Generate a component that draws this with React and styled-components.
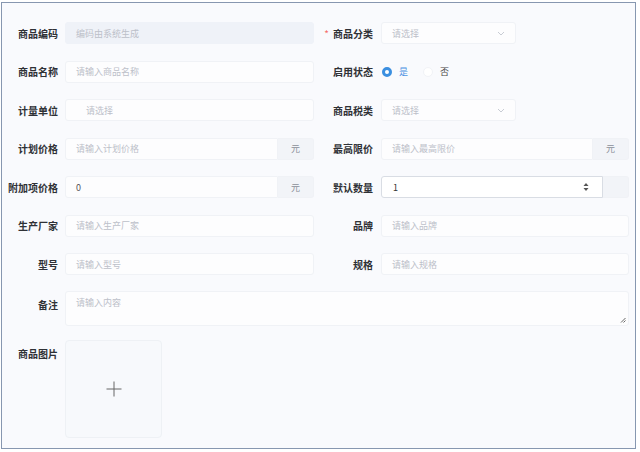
import { createGlobalStyle, styled } from 'styled-components'

const GlobalStyle = createGlobalStyle`
  html, body {
    margin: 0;
    padding: 0;
    background: #fff;
  }
  body {
    font-family: "Noto Sans CJK SC", "Noto Sans", sans-serif;
  }
`

function Chevron() {
  return (
    <svg width="8" height="5" viewBox="0 0 8 5">
      <path d="M1 1l3 3 3-3" fill="none" stroke="#c8ccd4" strokeWidth="1" />
    </svg>
  )
}

function Spinner() {
  return (
    <svg width="6" height="10" viewBox="0 0 6 10">
      <path d="M3 1L5.5 4H0.5z" fill="#555" />
      <path d="M3 9L5.5 6H0.5z" fill="#555" />
    </svg>
  )
}

function App() {
  return (
    <>
      <GlobalStyle />
      <Frame>
        <Grid>
          <Field>
            <Label $w={55}>商品编码</Label>
            <Input $disabled>编码由系统生成</Input>
          </Field>
          <Field>
            <Label $w={59} $required>商品分类</Label>
            <Select $w={135}>
              <span>请选择</span>
              <Chevron />
            </Select>
          </Field>

          <Field>
            <Label $w={55}>商品名称</Label>
            <Input>请输入商品名称</Input>
          </Field>
          <Field>
            <Label $w={59}>启用状态</Label>
            <Radios>
              <Radio $checked>
                <Dot $checked />
                <span>是</span>
              </Radio>
              <Radio>
                <Dot />
                <span>否</span>
              </Radio>
            </Radios>
          </Field>

          <Field>
            <Label $w={55}>计量单位</Label>
            <Select $indent>
              <span>请选择</span>
            </Select>
          </Field>
          <Field>
            <Label $w={59}>商品税类</Label>
            <Select $w={135}>
              <span>请选择</span>
              <Chevron />
            </Select>
          </Field>

          <Field>
            <Label $w={55}>计划价格</Label>
            <Group>
              <Input $joined>请输入计划价格</Input>
              <Addon>元</Addon>
            </Group>
          </Field>
          <Field>
            <Label $w={59}>最高限价</Label>
            <Group>
              <Input $joined>请输入最高限价</Input>
              <Addon>元</Addon>
            </Group>
          </Field>

          <Field>
            <Label $w={55}>附加项价格</Label>
            <Group>
              <Input $joined $value>0</Input>
              <Addon>元</Addon>
            </Group>
          </Field>
          <Field>
            <Label $w={59}>默认数量</Label>
            <Group>
              <Number>
                <span>1</span>
                <Spinner />
              </Number>
              <Addon $w={26} />
            </Group>
          </Field>

          <Field>
            <Label $w={55}>生产厂家</Label>
            <Input>请输入生产厂家</Input>
          </Field>
          <Field>
            <Label $w={59}>品牌</Label>
            <Input>请输入品牌</Input>
          </Field>

          <Field>
            <Label $w={55}>型号</Label>
            <Input>请输入型号</Input>
          </Field>
          <Field>
            <Label $w={59}>规格</Label>
            <Input>请输入规格</Input>
          </Field>
        </Grid>

        <Wide>
          <Label $w={55} $top>备注</Label>
          <TextArea>
            <span>请输入内容</span>
            <Grip viewBox="0 0 6 6">
              <path d="M1 5.5L5.5 1M3.5 5.5L5.5 3.5" stroke="#555" strokeWidth="0.9" />
            </Grip>
          </TextArea>
        </Wide>

        <Wide $gap={14}>
          <Label $w={55} $top>商品图片</Label>
          <Upload>
            <svg width="16" height="16" viewBox="0 0 16 16">
              <path d="M8 0.5v15M0.5 8h15" stroke="#666" strokeWidth="1" />
            </svg>
          </Upload>
        </Wide>
      </Frame>
    </>
  )
}

export default App

const Frame = styled.div`
  box-sizing: border-box;
  width: 635px;
  height: 447px;
  margin: 2px 0 0 1px;
  border: 1px solid #8797b0;
  background: #f9fafd;
  padding: 19px 6px 0 1px;
`
const Grid = styled.div`
  display: grid;
  grid-template-columns: 311px 315px;
  grid-auto-rows: 22px;
  row-gap: 16.5px;
`
const Field = styled.div`
  display: flex;
  align-items: center;
  min-width: 0;
`
const Label = styled.div`
  flex: none;
  width: ${(p) => p.$w}px;
  margin-right: ${(p) => (p.$w === 59 ? 8 : 7)}px;
  text-align: right;
  font-size: 10px;
  font-weight: 700;
  color: #2f3136;
  white-space: nowrap;
  align-self: ${(p) => (p.$top ? 'flex-start' : 'auto')};
  padding-top: ${(p) => (p.$top ? '6px' : '0')};
  &::before {
    content: ${(p) => (p.$required ? "'*'" : 'none')};
    color: #f56c6c;
    font-weight: 400;
    margin-right: 4px;
  }
`
const Input = styled.div`
  box-sizing: border-box;
  flex: 1;
  height: 22px;
  display: flex;
  align-items: center;
  padding: 0 10px;
  font-size: 9px;
  color: ${(p) => (p.$value ? '#555' : '#bcc0c9')};
  background: ${(p) => (p.$disabled ? '#eff2f8' : '#fdfdfe')};
  border: 1px solid ${(p) => (p.$disabled ? '#eff2f8' : '#f0f2f6')};
  border-radius: ${(p) => (p.$joined ? '3px 0 0 3px' : '3px')};
`
const Select = styled.div`
  box-sizing: border-box;
  flex: ${(p) => (p.$w ? 'none' : '1')};
  width: ${(p) => (p.$w ? `${p.$w}px` : 'auto')};
  height: 22px;
  display: flex;
  align-items: center;
  justify-content: space-between;
  padding: 0 10px 0 ${(p) => (p.$indent ? 20 : 10)}px;
  font-size: 9px;
  color: #bcc0c9;
  background: #fdfdfe;
  border: 1px solid #f0f2f6;
  border-radius: 3px;
`
const Group = styled.div`
  flex: 1;
  display: flex;
  height: 22px;
`
const Addon = styled.div`
  box-sizing: border-box;
  flex: none;
  width: ${(p) => p.$w || 36}px;
  display: flex;
  align-items: center;
  justify-content: center;
  font-size: 9px;
  color: #8a8f99;
  background: #f2f4f8;
  border: 1px solid #f0f2f6;
  border-left: none;
  border-radius: 0 3px 3px 0;
`
const Number = styled.div`
  box-sizing: border-box;
  flex: 1;
  display: flex;
  align-items: center;
  justify-content: space-between;
  padding: 0 13px 0 11px;
  font-size: 9px;
  color: #333;
  background: #fff;
  border: 1px solid #d9dde4;
  border-radius: 3px 0 0 3px;
`
const Radios = styled.div`
  display: flex;
  align-items: center;
  gap: 15px;
  padding-left: 1px;
`
const Radio = styled.div`
  display: flex;
  align-items: center;
  gap: 7px;
  font-size: 9px;
  color: ${(p) => (p.$checked ? '#4a90e2' : '#444')};
`
const Dot = styled.span`
  box-sizing: border-box;
  width: 10px;
  height: 10px;
  border-radius: 50%;
  border: ${(p) => (p.$checked ? '3px solid #3b8fe0' : '1px solid #f1f3f7')};
  background: #fff;
`
const Wide = styled.div`
  display: flex;
  margin-top: ${(p) => p.$gap || 16}px;
`
const TextArea = styled.div`
  box-sizing: border-box;
  position: relative;
  flex: 1;
  height: 35px;
  padding: 4px 10px;
  font-size: 9px;
  color: #bcc0c9;
  background: #fdfdfe;
  border: 1px solid #f0f2f6;
  border-radius: 3px;
`
const Grip = styled.svg`
  position: absolute;
  right: 2px;
  bottom: 2px;
  width: 6px;
  height: 6px;
`
const Upload = styled.div`
  box-sizing: border-box;
  width: 97px;
  height: 98px;
  display: flex;
  align-items: center;
  justify-content: center;
  background: #f7f9fc;
  border: 1px solid #eef1f5;
  border-radius: 4px;
`
